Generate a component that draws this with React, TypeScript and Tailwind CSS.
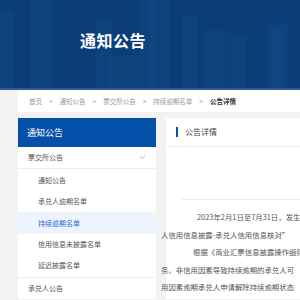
import React from "react";

const font = { fontFamily: '"Noto Sans CJK SC", "Noto Sans", sans-serif' };

function Skyline() {
  return (
    <svg className="absolute inset-0" width="300" height="88" viewBox="0 0 300 88" preserveAspectRatio="none">
      <g fill="#0f4682" opacity="0.5">
        <rect x="0" y="10" width="14" height="78" />
        <rect x="30" y="0" width="22" height="88" />
        <rect x="95" y="20" width="18" height="68" />
        <rect x="140" y="0" width="30" height="88" />
        <rect x="182" y="15" width="16" height="73" />
        <rect x="205" y="30" width="22" height="58" />
        <rect x="228" y="36" width="18" height="52" />
        <rect x="268" y="24" width="20" height="64" />
      </g>
      <g fill="#164d89" opacity="0.3">
        <rect x="150" y="0" width="8" height="88" />
        <rect x="272" y="30" width="10" height="58" />
        <rect x="110" y="55" width="30" height="33" />
      </g>
    </svg>
  );
}

export default function App() {
  const sub = ["通知公告", "承兑人逾期名单", "持续逾期名单", "信用信息未披露名单", "延迟披露名单"];
  return (
    <div className="w-[300px] h-[300px] overflow-hidden bg-[#f2f2f2]" style={font}>
      <div className="relative h-[88px] bg-[#0b3e79] overflow-hidden">
        <Skyline />
        <div className="relative pl-[80px] pt-[28px] text-[16px] font-bold text-white leading-[24px] tracking-[0.5px]">
          通知公告
        </div>
      </div>
      <div className="h-[2px] bg-[#2a5c96]" />
      <div className="ml-[18px] h-[22px] bg-white flex items-center pl-[11px] gap-[7px] text-[6.5px] text-[#9a9a9a] leading-none">
        <span>首页</span>
        <span>&gt;</span>
        <span>通知公告</span>
        <span>&gt;</span>
        <span>票交所公告</span>
        <span>&gt;</span>
        <span>持续逾期名单</span>
        <span>&gt;</span>
        <span className="text-[#333] font-bold">公告详情</span>
      </div>
      <div className="flex mt-[6px] ml-[18px] gap-[10px]">
        <div className="w-[138px] shrink-0 bg-white">
          <div className="h-[29px] bg-[#0450a8] flex items-center pl-[9px] text-[9px] text-white">通知公告</div>
          <div className="h-[22px] flex items-center justify-between pl-[10px] pr-[10px] text-[7px] text-[#555] border-b border-[#eeeeee]">
            <span>票交所公告</span>
            <svg width="7" height="5" viewBox="0 0 7 5"><path d="M1 1 L3.5 3.5 L6 1" fill="none" stroke="#aaa" strokeWidth="0.8" /></svg>
          </div>
          <div className="pt-[1px]">
            {sub.map((s, i) => (
              <div
                key={s}
                className={
                  i === 2
                    ? "h-[22px] flex items-center pl-[20px] text-[7px] text-[#2e6fcf] bg-[#edf4fd]"
                    : "h-[21px] flex items-center pl-[20px] text-[7px] text-[#555]"
                }
              >
                {s}
              </div>
            ))}
          </div>
          <div className="h-[22px] flex items-center pl-[10px] text-[7px] text-[#555] border-t border-[#eeeeee] mt-[1px]">承兑人公告</div>
        </div>
        <div className="flex-1 bg-white">
          <div className="h-[29px] flex items-center pl-[10px] border-b border-[#eeeeee]">
            <div className="w-[2px] h-[10px] bg-[#0450a8]" />
            <span className="ml-[7px] text-[8px] text-[#444]">公告详情</span>
          </div>
          <div className="h-[53px] mx-[15px] border-b border-[#eeeeee]" />
          <div className="pt-[8px] text-[7.4px] leading-[17.5px] text-[#555] whitespace-nowrap">
            <div className="pl-[31px]">2023年2月1日至7月31日，发生3次以上</div>
            <div className="-ml-[5px]">人信用信息披露-承兑人信用信息核对”</div>
            <div className="pl-[27px]">根据《商业汇票信息披露操作细则》</div>
            <div className="-ml-[5px]">务。非信用因素导致持续逾期的承兑人可</div>
            <div className="-ml-[5px]">用因素逾期承兑人申请解除持续逾期状态</div>
          </div>
        </div>
      </div>
    </div>
  );
}
